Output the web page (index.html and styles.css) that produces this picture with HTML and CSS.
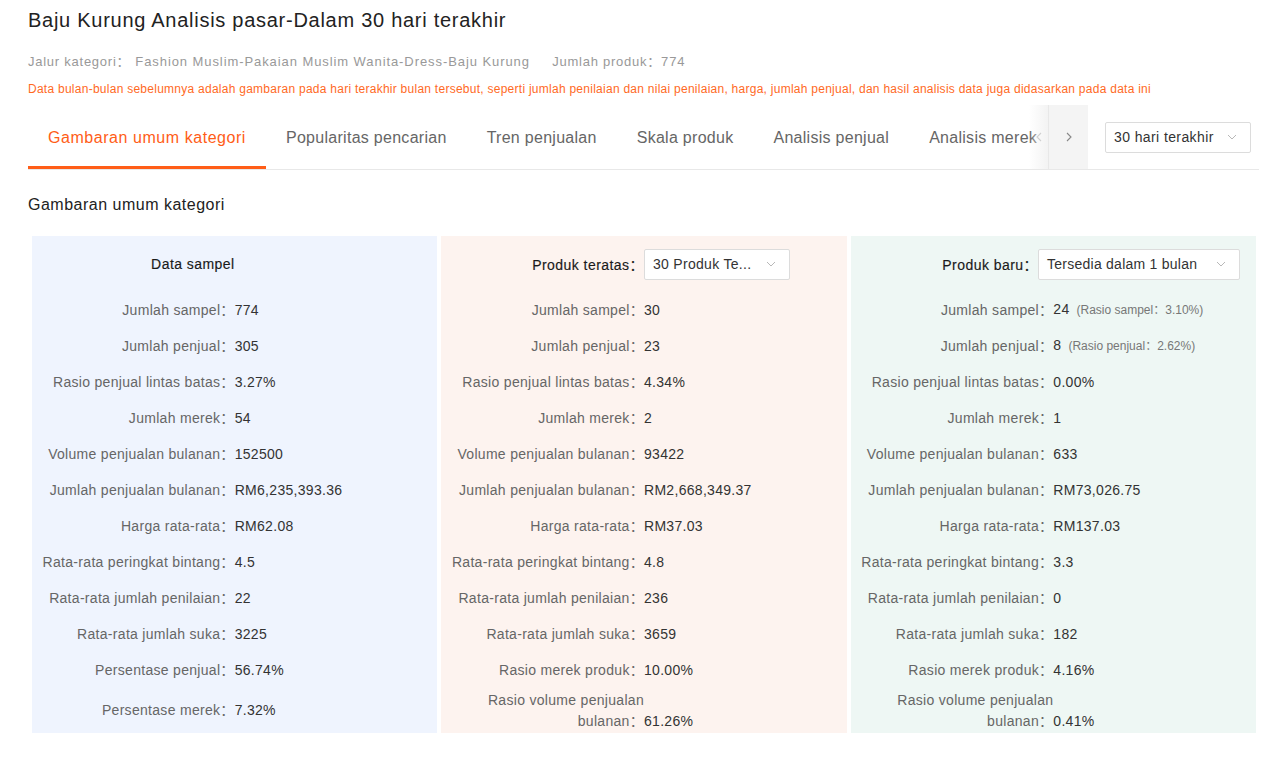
FILE: index.html
```html
<!DOCTYPE html>
<html lang="id">
<head>
<meta charset="utf-8">
<title>Baju Kurung Analisis pasar</title>
<link rel="stylesheet" href="styles.css">
</head>
<body>
<div class="page">
  <h1 class="title">Baju Kurung Analisis pasar-Dalam 30 hari terakhir</h1>
  <div class="meta">
    <span class="meta-k">Jalur kategori：</span><span class="meta-v">Fashion Muslim-Pakaian Muslim Wanita-Dress-Baju Kurung</span>
    <span class="meta-k2">Jumlah produk：</span><span class="meta-v">774</span>
  </div>
  <div class="note">Data bulan-bulan sebelumnya adalah gambaran pada hari terakhir bulan tersebut, seperti jumlah penilaian dan nilai penilaian, harga, jumlah penjual, dan hasil analisis data juga didasarkan pada data ini</div>

  <div class="tabbar">
    <div class="tabs-wrap">
      <div class="tabs">
        <div class="tab active">Gambaran umum kategori</div>
        <div class="tab">Popularitas pencarian</div>
        <div class="tab">Tren penjualan</div>
        <div class="tab">Skala produk</div>
        <div class="tab">Analisis penjual</div>
        <div class="tab">Analisis merek</div>
      </div>
      <div class="tab-nav">
        <div class="nav-btn prev"><svg width="8" height="10" viewBox="0 0 8 10"><path d="M6 1 L2 5 L6 9" fill="none" stroke="currentColor" stroke-width="1.1"/></svg></div>
        <div class="nav-btn next"><svg width="8" height="10" viewBox="0 0 8 10"><path d="M2 1 L6 5 L2 9" fill="none" stroke="currentColor" stroke-width="1.1"/></svg></div>
      </div>
    </div>
    <div class="select select-period">
      <span class="select-text">30 hari terakhir</span>
      <svg class="chev" width="10" height="6" viewBox="0 0 10 6"><path d="M1 1 L5 5 L9 1" fill="none" stroke="currentColor" stroke-width="1"/></svg>
    </div>
  </div>

  <h2 class="section-title">Gambaran umum kategori</h2>

  <div class="panels">
    <div class="panel panel-blue">
      <div class="panel-head">
        <div class="head-label">Data sampel</div>
      </div>
      <div class="row"><div class="lbl">Jumlah sampel：</div><div class="val">774</div></div>
      <div class="row"><div class="lbl">Jumlah penjual：</div><div class="val">305</div></div>
      <div class="row"><div class="lbl">Rasio penjual lintas batas：</div><div class="val">3.27%</div></div>
      <div class="row"><div class="lbl">Jumlah merek：</div><div class="val">54</div></div>
      <div class="row"><div class="lbl">Volume penjualan bulanan：</div><div class="val">152500</div></div>
      <div class="row"><div class="lbl">Jumlah penjualan bulanan：</div><div class="val">RM6,235,393.36</div></div>
      <div class="row"><div class="lbl">Harga rata-rata：</div><div class="val">RM62.08</div></div>
      <div class="row"><div class="lbl">Rata-rata peringkat bintang：</div><div class="val">4.5</div></div>
      <div class="row"><div class="lbl">Rata-rata jumlah penilaian：</div><div class="val">22</div></div>
      <div class="row"><div class="lbl">Rata-rata jumlah suka：</div><div class="val">3225</div></div>
      <div class="row"><div class="lbl">Persentase penjual：</div><div class="val">56.74%</div></div>
      <div class="row row-last"><div class="lbl">Persentase merek：</div><div class="val">7.32%</div></div>
    </div>

    <div class="panel panel-peach">
      <div class="panel-head">
        <div class="head-label">Produk teratas：</div>
        <div class="select select-top">
          <span class="select-text">30 Produk Te...</span>
          <svg class="chev" width="10" height="6" viewBox="0 0 10 6"><path d="M1 1 L5 5 L9 1" fill="none" stroke="currentColor" stroke-width="1"/></svg>
        </div>
      </div>
      <div class="row"><div class="lbl">Jumlah sampel：</div><div class="val">30</div></div>
      <div class="row"><div class="lbl">Jumlah penjual：</div><div class="val">23</div></div>
      <div class="row"><div class="lbl">Rasio penjual lintas batas：</div><div class="val">4.34%</div></div>
      <div class="row"><div class="lbl">Jumlah merek：</div><div class="val">2</div></div>
      <div class="row"><div class="lbl">Volume penjualan bulanan：</div><div class="val">93422</div></div>
      <div class="row"><div class="lbl">Jumlah penjualan bulanan：</div><div class="val">RM2,668,349.37</div></div>
      <div class="row"><div class="lbl">Harga rata-rata：</div><div class="val">RM37.03</div></div>
      <div class="row"><div class="lbl">Rata-rata peringkat bintang：</div><div class="val">4.8</div></div>
      <div class="row"><div class="lbl">Rata-rata jumlah penilaian：</div><div class="val">236</div></div>
      <div class="row"><div class="lbl">Rata-rata jumlah suka：</div><div class="val">3659</div></div>
      <div class="row"><div class="lbl">Rasio merek produk：</div><div class="val">10.00%</div></div>
      <div class="row row-last"><div class="lbl lbl-wrap">Rasio volume penjualan bulanan：</div><div class="val val-bottom">61.26%</div></div>
    </div>

    <div class="panel panel-mint">
      <div class="panel-head">
        <div class="head-label">Produk baru：</div>
        <div class="select select-new">
          <span class="select-text">Tersedia dalam 1 bulan</span>
          <svg class="chev" width="10" height="6" viewBox="0 0 10 6"><path d="M1 1 L5 5 L9 1" fill="none" stroke="currentColor" stroke-width="1"/></svg>
        </div>
      </div>
      <div class="row"><div class="lbl">Jumlah sampel：</div><div class="val">24<span class="sub">(Rasio sampel：3.10%)</span></div></div>
      <div class="row"><div class="lbl">Jumlah penjual：</div><div class="val">8<span class="sub">(Rasio penjual：2.62%)</span></div></div>
      <div class="row"><div class="lbl">Rasio penjual lintas batas：</div><div class="val">0.00%</div></div>
      <div class="row"><div class="lbl">Jumlah merek：</div><div class="val">1</div></div>
      <div class="row"><div class="lbl">Volume penjualan bulanan：</div><div class="val">633</div></div>
      <div class="row"><div class="lbl">Jumlah penjualan bulanan：</div><div class="val">RM73,026.75</div></div>
      <div class="row"><div class="lbl">Harga rata-rata：</div><div class="val">RM137.03</div></div>
      <div class="row"><div class="lbl">Rata-rata peringkat bintang：</div><div class="val">3.3</div></div>
      <div class="row"><div class="lbl">Rata-rata jumlah penilaian：</div><div class="val">0</div></div>
      <div class="row"><div class="lbl">Rata-rata jumlah suka：</div><div class="val">182</div></div>
      <div class="row"><div class="lbl">Rasio merek produk：</div><div class="val">4.16%</div></div>
      <div class="row row-last"><div class="lbl lbl-wrap">Rasio volume penjualan bulanan：</div><div class="val val-bottom">0.41%</div></div>
    </div>
  </div>
</div>
</body>
</html>
```

FILE: styles.css
```css
* { box-sizing: border-box; }
html, body { margin: 0; padding: 0; background: #fff; }
body {
  font-family: "Liberation Sans", Arial, "Noto Sans CJK SC", sans-serif;
  color: #333;
  font-size: 14px;
}
.page { padding: 6px 29px 0 28px; }

.title {
  margin: 0;
  font-size: 20px;
  font-weight: 400;
  line-height: 28px;
  color: #222;
  letter-spacing: 0.73px;
}
.meta {
  margin-top: 19px;
  font-size: 13px;
  line-height: 18px;
  color: #999;
  letter-spacing: 0.75px;
}
.meta-v { letter-spacing: 0.92px; }
.meta-k { margin-right: 5px; }
.meta-k2 { margin-left: 18px; }
.note {
  margin-top: 9px;
  font-size: 12px;
  line-height: 18px;
  color: #ff6a1f;
  letter-spacing: 0.26px;
}

.tabbar {
  margin-top: 7px;
  display: flex;
  align-items: center;
  border-bottom: 1px solid #e8e8e8;
}
.tabs-wrap {
  position: relative;
  width: 1060px;
  height: 64px;
  overflow: hidden;
}
.tabs { display: flex; white-space: nowrap; }
.tab {
  flex-shrink: 0;
  padding: 2px 20px 0;
  height: 64px;
  line-height: 62px;
  font-size: 16px;
  color: #666;
  letter-spacing: 0.28px;
}
.tab.active {
  color: #ff5d17;
  box-shadow: inset 0 -3px 0 #ff5d17;
  letter-spacing: 0.55px;
}
.tab-nav {
  position: absolute;
  top: 0;
  right: 0;
  height: 64px;
  display: flex;
}
.nav-btn {
  height: 64px;
  display: flex;
  align-items: center;
  justify-content: center;
}
.nav-btn.prev {
  width: 19px;
  color: #d0d0d0;
  background: linear-gradient(to right, rgba(255,255,255,0), #f3f3f3);
}
.nav-btn.next {
  width: 40px;
  color: #888;
  background: #f4f4f4;
  border-left: 1px solid #e8e8e8;
}

.select {
  display: flex;
  align-items: center;
  justify-content: space-between;
  height: 31px;
  padding: 0 13px 0 8px;
  border: 1px solid #dcdcdc;
  border-radius: 2px;
  background: #fff;
  color: #333;
  font-size: 14px;
  flex-shrink: 0;
}
.select .chev { color: #b8b8b8; flex-shrink: 0; }
.select-period { margin-left: 17px; width: 146px; letter-spacing: 0.4px; }
.select-top { width: 146px; letter-spacing: 0.3px; }
.select-new { width: 202px; letter-spacing: 0.25px; }

.section-title {
  margin: 25px 0 0;
  font-size: 16px;
  font-weight: 400;
  line-height: 20px;
  color: #222;
  letter-spacing: 0.5px;
}

.panels {
  margin: 21px 3px 0 4px;
  display: grid;
  grid-template-columns: 1fr 1fr 1fr;
  gap: 4px;
}
.panel-blue { background: #eff4fe; }
.panel-peach { background: #fdf3ef; }
.panel-mint { background: #eef7f4; }

.panel-head {
  height: 56px;
  display: flex;
  align-items: center;
  padding-right: 16px;
}
.head-label {
  flex: 0 1 calc(50% + 8px);
  min-width: 0;
  text-align: right;
  color: #1a1a1a;
  white-space: nowrap;
  letter-spacing: 0.45px;
  -webkit-text-stroke: 0.15px #1a1a1a;
}

.row {
  display: flex;
  align-items: center;
  height: 36px;
}
.row-last { height: 45px; }
.lbl {
  flex: 0 0 50%;
  text-align: right;
  color: #666;
  line-height: 21px;
  white-space: nowrap;
  letter-spacing: 0.3px;
}
.lbl-wrap { white-space: normal; padding-left: 40px; }
.val {
  flex: 1;
  color: #333;
  line-height: 21px;
  white-space: nowrap;
  letter-spacing: 0.3px;
}
.val-bottom { align-self: flex-end; margin-bottom: 1px; }
.sub {
  margin-left: 7px;
  font-size: 12px;
  color: #777;
  letter-spacing: 0;
}
```
